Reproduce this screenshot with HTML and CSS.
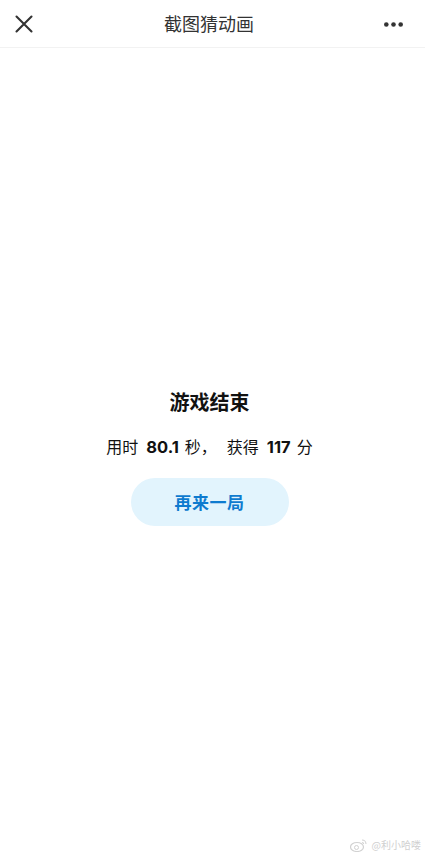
FILE: index.html
```html
<!DOCTYPE html>
<html lang="zh">
<head>
<meta charset="utf-8">
<title>截图猜动画</title>
<link rel="stylesheet" href="styles.css">
</head>
<body>
<div class="page">
  <header class="topbar">
    <button class="icon-btn close" aria-label="关闭">
      <svg width="18" height="18" viewBox="0 0 18 18"><path d="M1.5 1.5 L16.5 16.5 M16.5 1.5 L1.5 16.5" stroke="#333" stroke-width="2.1" stroke-linecap="round" fill="none"/></svg>
    </button>
    <h1 class="title">截图猜动画</h1>
    <button class="icon-btn more" aria-label="更多">
      <svg width="19" height="5" viewBox="0 0 19 5"><circle cx="2.3" cy="2.5" r="2.3" fill="#333"/><circle cx="9.5" cy="2.5" r="2.3" fill="#333"/><circle cx="16.7" cy="2.5" r="2.3" fill="#333"/></svg>
    </button>
  </header>
  <main class="result">
    <h2 class="result-title">游戏结束</h2>
    <p class="result-text"><span>用时</span><b class="num">80.1</b><span>秒，</span><span class="gap"></span><span>获得</span><b class="num">117</b><span>分</span></p>
    <button class="again">再来一局</button>
  </main>
  <div class="watermark">
    <svg width="18" height="14" viewBox="0 0 18 14"><ellipse cx="7" cy="9" rx="6.5" ry="4.5" fill="none" stroke="#d2d2d2" stroke-width="1.2"/><circle cx="6.5" cy="9.5" r="2" fill="none" stroke="#d2d2d2" stroke-width="1"/><path d="M12 2 a4 4 0 0 1 4 4 M12 4.5 a1.6 1.6 0 0 1 1.6 1.6" stroke="#d2d2d2" stroke-width="1.1" fill="none"/></svg>
    <span>@利小哈喽</span>
  </div>
</div>
</body>
</html>
```
FILE: styles.css
```css
* { box-sizing: border-box; }
html, body {
  margin: 0;
  padding: 0;
  background: #fff;
}
body {
  font-family: "Noto Sans CJK SC", "Noto Sans", "Liberation Sans", sans-serif;
  color: #111;
}
.page {
  width: 425px;
  height: 860px;
  display: flex;
  flex-direction: column;
  position: relative;
}
.topbar {
  height: 48px;
  border-bottom: 1px solid #f2f2f2;
  display: flex;
  align-items: center;
  justify-content: space-between;
  padding: 0 22px 0 15px;
}
.icon-btn {
  border: 0;
  background: none;
  padding: 0;
  display: flex;
  align-items: center;
  justify-content: center;
}
.close { width: 18px; height: 18px; }
.more { width: 19px; height: 5px; margin-top: 1px; }
.title {
  margin: 0 0 1px 1px;
  font-size: 18px;
  font-weight: 400;
  color: #333;
  line-height: 24px;
}
.result {
  display: flex;
  flex-direction: column;
  align-items: center;
  padding: 340px 6px 0 0;
}
.result-title {
  margin: 0;
  font-size: 20px;
  line-height: 28px;
  font-weight: 700;
  color: #111;
}
.result-text {
  margin: 18px 0 0;
  font-size: 16px;
  line-height: 24px;
  color: #111;
  display: flex;
  align-items: baseline;
}
.num {
  font-family: "Inter", "Noto Sans", sans-serif;
  font-weight: 700;
  font-size: 16.5px;
  margin: 0 6px 0 8px;
}
.gap { width: 10px; }
.again {
  margin-top: 19px;
  width: 158px;
  height: 48px;
  padding: 0 0 2px;
  border: 0;
  border-radius: 24px;
  background: #e2f4fd;
  color: #0e7bcf;
  font-family: "Noto Sans CJK SC", sans-serif;
  font-size: 17px;
  font-weight: 700;
  letter-spacing: 0.5px;
}
.watermark {
  position: absolute;
  right: 4px;
  bottom: 8px;
  display: flex;
  align-items: center;
  gap: 4px;
  color: #d0d0d0;
  font-size: 10px;
}
```
